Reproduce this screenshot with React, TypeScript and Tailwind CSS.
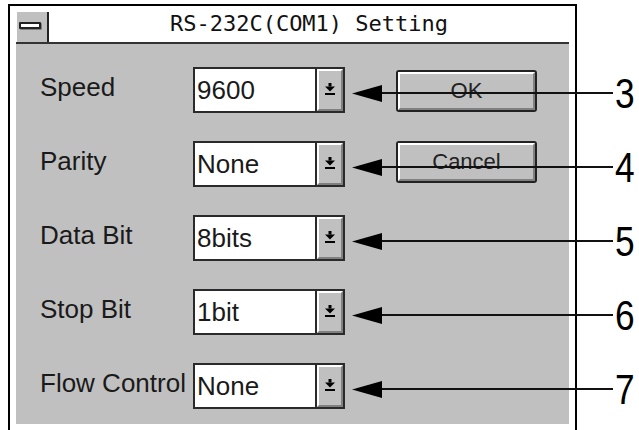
import React from 'react';

// RS-232C 设置对话框 (Win 3.1 风格) + 右侧编号标注

const ROWS: ReadonlyArray<{ label: string; value: string; no: string }> = [
  { label: 'Speed',        value: '9600',  no: '3' },
  { label: 'Parity',       value: 'None',  no: '4' },
  { label: 'Data Bit',     value: '8bits', no: '5' },
  { label: 'Stop Bit',     value: '1bit',  no: '6' },
  { label: 'Flow Control', value: 'None',  no: '7' },
];

const UI_FONT = { fontFamily: '"Liberation Sans", Arial, sans-serif' };

function DropIcon() {
  return (
    <svg width="10" height="12" viewBox="0 0 10 12" className="block">
      <rect x="3.5" y="0" width="3" height="3.5" fill="#000" />
      <polygon points="0,3.5 10,3.5 5,8.5" fill="#000" />
      <rect x="0" y="10" width="10" height="2" fill="#000" />
    </svg>
  );
}

function Combo({ value }: { value: string }) {
  return (
    <div className="w-[152px] h-[46px] flex border-2 border-[#2a2a2a] bg-white">
      <div className="flex-1 flex items-center pl-[2px] pb-[1px] text-[26px] text-[#1a1a1a] leading-none border-r-2 border-[#2a2a2a]">
        {value}
      </div>
      <div className="w-[26px] bg-[#c0c0c0] border-2 border-t-white border-l-white border-r-[#808080] border-b-[#808080] flex items-center justify-center pb-[3px]">
        <DropIcon />
      </div>
    </div>
  );
}

function PushButton({ label }: { label: string }) {
  return (
    <div className="w-[141px] h-[42px] border-2 border-[#222] rounded-[3px] bg-[#c0c0c0]">
      <div className="h-full border-2 border-t-white border-l-white border-r-[#808080] border-b-[#808080] flex items-center justify-center text-[22px] text-[#222] leading-none">
        {label}
      </div>
    </div>
  );
}

export default function App() {
  return (
    <div className="relative w-[639px] h-[430px] bg-white overflow-hidden" style={UI_FONT}>
      {/* 窗口 */}
      <div className="ml-[8px] mt-[4px] w-[569px] h-[426px] border-2 border-b-0 border-black px-[6px]">
        {/* 标题栏 */}
        <div className="h-[36px] flex">
          <div className="ml-[1px] mt-[6px] w-[32px] h-[30px] bg-[#c0c0c0] border-r-2 border-[#222] flex items-center justify-center pr-[4px] pb-[4px]">
            <div className="w-[22px] h-[7px] bg-white border-2 border-[#222] rounded-[1px] shadow-[1px_1px_0_#808080]" />
          </div>
          <div
            className="flex-1 flex items-center justify-center text-[22px] text-[#111] leading-none pb-[1px]"
            style={{ fontFamily: '"DejaVu Sans Mono", "Liberation Mono", monospace' }}
          >
            RS-232C(COM1) Setting
          </div>
        </div>

        {/* 面板 */}
        <div className="h-[382px] bg-[#c0c0c0] border-t-2 border-[#333] pl-[24px] pt-[23px] flex">
          <div className="flex flex-col gap-[28px]">
            {ROWS.map((r) => (
              <div key={r.label} className="h-[46px] flex items-center">
                <div className="w-[153px] pb-[6px] text-[26px] text-[#1a1a1a] leading-none whitespace-nowrap">{r.label}</div>
                <Combo value={r.value} />
              </div>
            ))}
          </div>
          <div className="ml-[51px] mt-[3px] flex flex-col gap-[29px]">
            <PushButton label="OK" />
            <PushButton label="Cancel" />
          </div>
        </div>
      </div>

      {/* 编号标注 */}
      <div className="absolute left-[352px] right-0 top-[75px] flex flex-col gap-[38px] pointer-events-none">
        {ROWS.map((r) => (
          <div key={r.no} className="h-[36px] flex items-center">
            <svg width="30" height="17" viewBox="0 0 30 17" className="block shrink-0">
              <polygon points="0,8.5 30,0 30,17" fill="#000" />
            </svg>
            <div className="flex-1 h-[2px] bg-[#111]" />
            <div className="w-[24px] ml-[2px] shrink-0">
              <span className="inline-block origin-left scale-x-[0.82] text-[43px] leading-none text-black">
                {r.no}
              </span>
            </div>
          </div>
        ))}
      </div>
    </div>
  );
}
